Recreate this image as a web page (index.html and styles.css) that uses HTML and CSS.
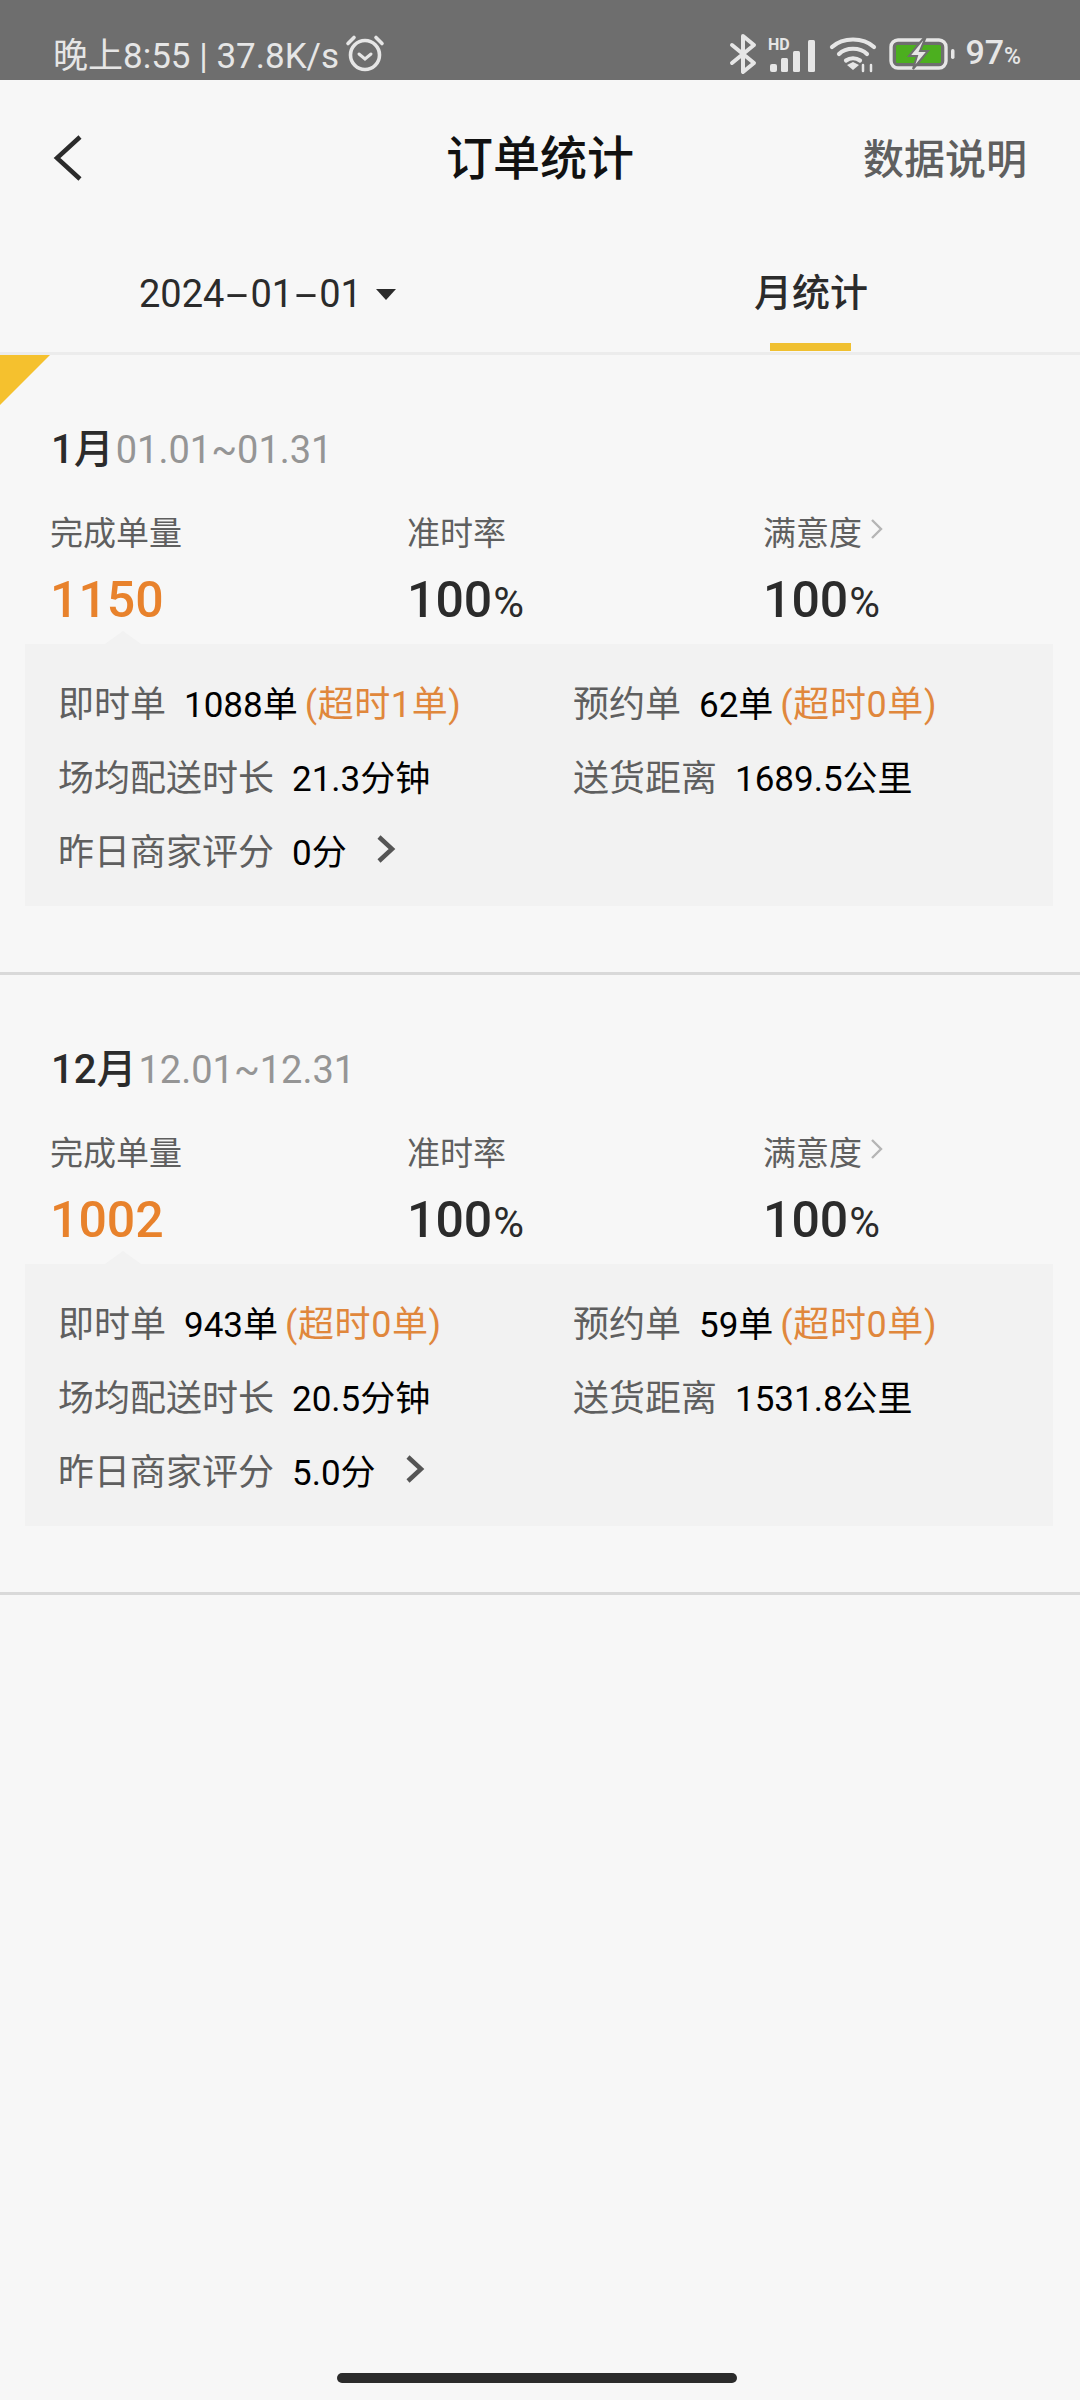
FILE: index.html
```html
<!DOCTYPE html>
<html lang="zh-CN">
<head>
  <meta charset="UTF-8" />
  <meta name="viewport" content="width=device-width, initial-scale=1.0"/>
  <title>订单统计</title>
  <link rel="stylesheet" href="styles.css">
</head>
<body>

  <!-- Status bar -->
  <div class="status-bar">
    <div class="status-left">
      <span>晚上8:55 | 37.8K/s</span>
      <svg class="alarm" width="40" height="38" viewBox="0 0 40 38" fill="none" stroke="#e6e6e6" stroke-linecap="round">
        <circle cx="20" cy="21" r="14.5" stroke-width="3.6"/>
        <path d="M14 20l6 5 6-5" stroke-width="3"/>
        <path d="M3 9.500L9 3.500M37 9.500L31 3.500" stroke-width="3.600"/>
      </svg>
    </div>
    <div class="status-right">
      <svg width="30" height="42" viewBox="0 0 30 42" fill="none" stroke="#e6e6e6" stroke-width="4" stroke-linejoin="round" stroke-linecap="round">
        <path d="M4 12l22 18-11 9V3l11 9L4 30"/>
      </svg>
      <svg class="signal" width="50" height="38" viewBox="0 0 50 38">
        <text class="hd-text" x="1" y="15">HD</text>
        <rect x="3" y="29" width="7" height="8" rx="2" fill="#e6e6e6"/>
        <rect x="14" y="23" width="7" height="14" rx="1.500" fill="#e6e6e6"/>
        <rect x="26" y="16" width="7" height="21" rx="1.500" fill="#e6e6e6"/>
        <rect x="41" y="5" width="7" height="32" rx="1.500" fill="#e6e6e6"/>
      </svg>
      <svg class="wifi" width="46" height="36" viewBox="0 0 46 36" fill="none" stroke="#e6e6e6" stroke-width="4.200" stroke-linecap="round">
        <path d="M2 11C13 1 33 1 44 11"/>
        <path d="M9 18C16 11 30 11 37 18"/>
        <path d="M16 24.500C20 21.500 26 21.500 30 24.500"/>
        <path d="M17 29l6-3 6 3-6 5z" fill="#e6e6e6" stroke="none"/>
        <path d="M33 35v-6M41 35v-6" stroke-width="2.500"/>
      </svg>
      <svg class="battery" width="66" height="32" viewBox="0 0 66 32">
        <rect x="2" y="2" width="55" height="28" rx="7" fill="none" stroke="#e6e6e6" stroke-width="3.400"/>
        <rect x="7" y="7" width="45" height="18" rx="1.500" fill="#4caf1f"/>
        <path d="M34 1L20 18h8l-4 13 15-18h-8l5-12z" fill="#e6e6e6" stroke="#6e6e6e" stroke-width="2"/>
        <rect x="62" y="11" width="3.500" height="10" rx="1.700" fill="#e6e6e6"/>
      </svg>
      <span class="battery-num">97<small>%</small></span>
    </div>
  </div>

  <!-- Navbar -->
  <nav class="navbar">
    <svg class="back" width="30" height="46" viewBox="0 0 30 46" fill="none" stroke="#2b2b2b" stroke-width="4.500">
      <path d="M27 2L4 23l23 21"/>
    </svg>
    <h1>订单统计</h1>
    <span class="nav-link">数据说明</span>
  </nav>

  <!-- Tabs -->
  <div class="tabs">
    <div class="tab date">
      <span>2024<b class="dash">-</b>01<b class="dash">-</b>01</span>
      <i class="caret"></i>
    </div>
    <div class="tab active"><span>月统计</span></div>
  </div>

  <!-- Month 1 -->
  <section class="month first">
    <i class="corner"></i>
    <h2><b>1月</b><span>01.01~01.31</span></h2>
    <div class="stats">
      <div class="stat">
        <p class="label">完成单量</p>
        <p class="value orange">1150</p>
      </div>
      <div class="stat">
        <p class="label">准时率</p>
        <p class="value">100<small>%</small></p>
      </div>
      <div class="stat">
        <p class="label">满意度 <svg class="mini-arrow" width="14" height="22" viewBox="0 0 14 22" fill="none" stroke="#b5b5b5" stroke-width="2.400"><path d="M2 2l9 9-9 9"/></svg></p>
        <p class="value">100<small>%</small></p>
      </div>
    </div>
    <div class="detail">
      <i class="notch"></i>
      <div class="row"><label>即时单</label><span>1088单</span><em>(超时1单)</em></div>
      <div class="row"><label>预约单</label><span>62单</span><em>(超时0单)</em></div>
      <div class="row"><label>场均配送时长</label><span>21.3分钟</span></div>
      <div class="row"><label>送货距离</label><span>1689.5公里</span></div>
      <div class="row"><label>昨日商家评分</label><span>0分</span>
        <svg class="arrow" width="20" height="30" viewBox="0 0 20 30" fill="none" stroke="#555" stroke-width="4.500"><path d="M3 3l13 12L3 27"/></svg>
      </div>
    </div>
  </section>

  <!-- Month 2 -->
  <section class="month">
    <h2><b>12月</b><span>12.01~12.31</span></h2>
    <div class="stats">
      <div class="stat">
        <p class="label">完成单量</p>
        <p class="value orange">1002</p>
      </div>
      <div class="stat">
        <p class="label">准时率</p>
        <p class="value">100<small>%</small></p>
      </div>
      <div class="stat">
        <p class="label">满意度 <svg class="mini-arrow" width="14" height="22" viewBox="0 0 14 22" fill="none" stroke="#b5b5b5" stroke-width="2.400"><path d="M2 2l9 9-9 9"/></svg></p>
        <p class="value">100<small>%</small></p>
      </div>
    </div>
    <div class="detail">
      <i class="notch"></i>
      <div class="row"><label>即时单</label><span>943单</span><em>(超时0单)</em></div>
      <div class="row"><label>预约单</label><span>59单</span><em>(超时0单)</em></div>
      <div class="row"><label>场均配送时长</label><span>20.5分钟</span></div>
      <div class="row"><label>送货距离</label><span>1531.8公里</span></div>
      <div class="row"><label>昨日商家评分</label><span>5.0分</span>
        <svg class="arrow" width="20" height="30" viewBox="0 0 20 30" fill="none" stroke="#555" stroke-width="4.500"><path d="M3 3l13 12L3 27"/></svg>
      </div>
    </div>
  </section>

  <div class="home-bar"></div>

</body>
</html>
```

FILE: styles.css
```css
* {
  margin: 0;
  padding: 0;
  box-sizing: border-box;
  font-family: Roboto, 'Noto Sans CJK SC', sans-serif;
}

body {
  width: 1080px;
  height: 2400px;
  background: #f7f7f7;
  color: #2b2b2b;
  position: relative;
  overflow: hidden;
}

/* Status bar */
.status-bar {
  height: 80px;
  background: #6e6e6e;
  color: #e6e6e6;
  padding: 27px 59px 0 53px;
  display: flex;
  justify-content: space-between;
  align-items: center;
}

.status-left {
  display: flex;
  align-items: center;
  gap: 6px;
  font-size: 35px;
  margin-top: -2px;
}

.status-right {
  display: flex;
  align-items: center;
  gap: 13px;
}

.status-right svg {
  overflow: visible;
}

.hd-text {
  font-size: 16px;
  font-weight: 700;
  fill: #e6e6e6;
}

.signal {
  margin-left: -4px;
}

.battery-num {
  font-size: 34px;
  line-height: 36px;
  font-weight: 500;
  margin: 2px 0 0 -3px;
}

.battery-num small {
  font-size: 23px;
}

/* Navbar */
.navbar {
  height: 155px;
  padding: 0 53px;
  display: flex;
  align-items: center;
  justify-content: space-between;
  position: relative;
}

.navbar h1 {
  position: absolute;
  left: 0;
  right: 0;
  padding-bottom: 6px;
  text-align: center;
  font-size: 47px;
  font-weight: 500;
  color: #111;
}

.nav-link {
  font-size: 41px;
  font-weight: 500;
  color: #5f5f5f;
  padding-bottom: 3px;
}

/* Tabs */
.tabs {
  height: 120px;
  display: flex;
  border-bottom: 3px solid #ececec;
}

.tab {
  width: 50%;
  display: flex;
  align-items: flex-start;
  font-size: 38px;
  color: #2b2b2b;
  position: relative;
}

.tab.date {
  gap: 14px;
  padding: 37px 0 0 139px;
}

.dash {
  display: inline-block;
  width: 26px;
  text-align: center;
  font-weight: 400;
  transform: scaleX(2.1);
}

.tab.active {
  font-size: 38px;
  font-weight: 500;
  padding: 27px 0 0 214px;
}

.tab.active::after {
  content: "";
  position: absolute;
  left: 230px;
  bottom: 1px;
  width: 81px;
  height: 8px;
  background: #f0c030;
}

.caret {
  width: 0;
  height: 0;
  margin-top: 17px;
  border-left: 10px solid transparent;
  border-right: 10px solid transparent;
  border-top: 11px solid #2b2b2b;
}

/* Month section */
.month {
  height: 620px;
  padding: 70px 27px 0 25px;
  border-bottom: 3px solid #d9d9d9;
  position: relative;
}

.corner {
  position: absolute;
  top: 0;
  left: 0;
  width: 0;
  height: 0;
  border-top: 50px solid #f5c12e;
  border-right: 50px solid transparent;
}

.month h2 {
  display: flex;
  align-items: baseline;
  padding-left: 26px;
  font-size: 40px;
  line-height: 50px;
  font-weight: 400;
}

.month h2 b {
  font-weight: 500;
}

.month h2 span {
  color: #959595;
  margin-left: 2px;
  font-size: 38px;
}

.stats {
  display: grid;
  grid-template-columns: 357px 356px 1fr;
  padding-left: 25px;
  margin-top: 35px;
}

.label {
  font-size: 33px;
  line-height: 48px;
  color: #5f5f5f;
}

.mini-arrow {
  vertical-align: 5px;
}

.value {
  font-size: 50px;
  line-height: 66px;
  font-weight: 500;
  color: #2b2b2b;
  margin-top: 9px;
}

.value small {
  font-size: 42px;
  line-height: 1;
  font-weight: 400;
  margin-left: 1px;
}

.orange {
  color: #e8822c;
}

/* Detail box */
.detail {
  position: relative;
  margin-top: 11px;
  height: 262px;
  background: #f2f2f2;
  padding: 20px 33px 0;
  display: grid;
  grid-template-columns: 515px 1fr;
  grid-auto-rows: 74px;
}

.notch {
  position: absolute;
  top: -13px;
  left: 80px;
  width: 0;
  height: 0;
  border-left: 18px solid transparent;
  border-right: 18px solid transparent;
  border-bottom: 13px solid #f2f2f2;
}

.row {
  display: flex;
  align-items: center;
  font-size: 35px;
  color: #000;
}

.row label {
  font-size: 36px;
  color: #5f5f5f;
  margin-right: 18px;
}

.row em {
  font-size: 36px;
  letter-spacing: 0.6px;
  font-style: normal;
  color: #e0873c;
  margin-left: 7px;
}

.arrow {
  margin-left: 29px;
}

.home-bar {
  position: absolute;
  left: 337px;
  top: 2373px;
  width: 400px;
  height: 10px;
  border-radius: 5px;
  background: #2b2b2b;
}
```
